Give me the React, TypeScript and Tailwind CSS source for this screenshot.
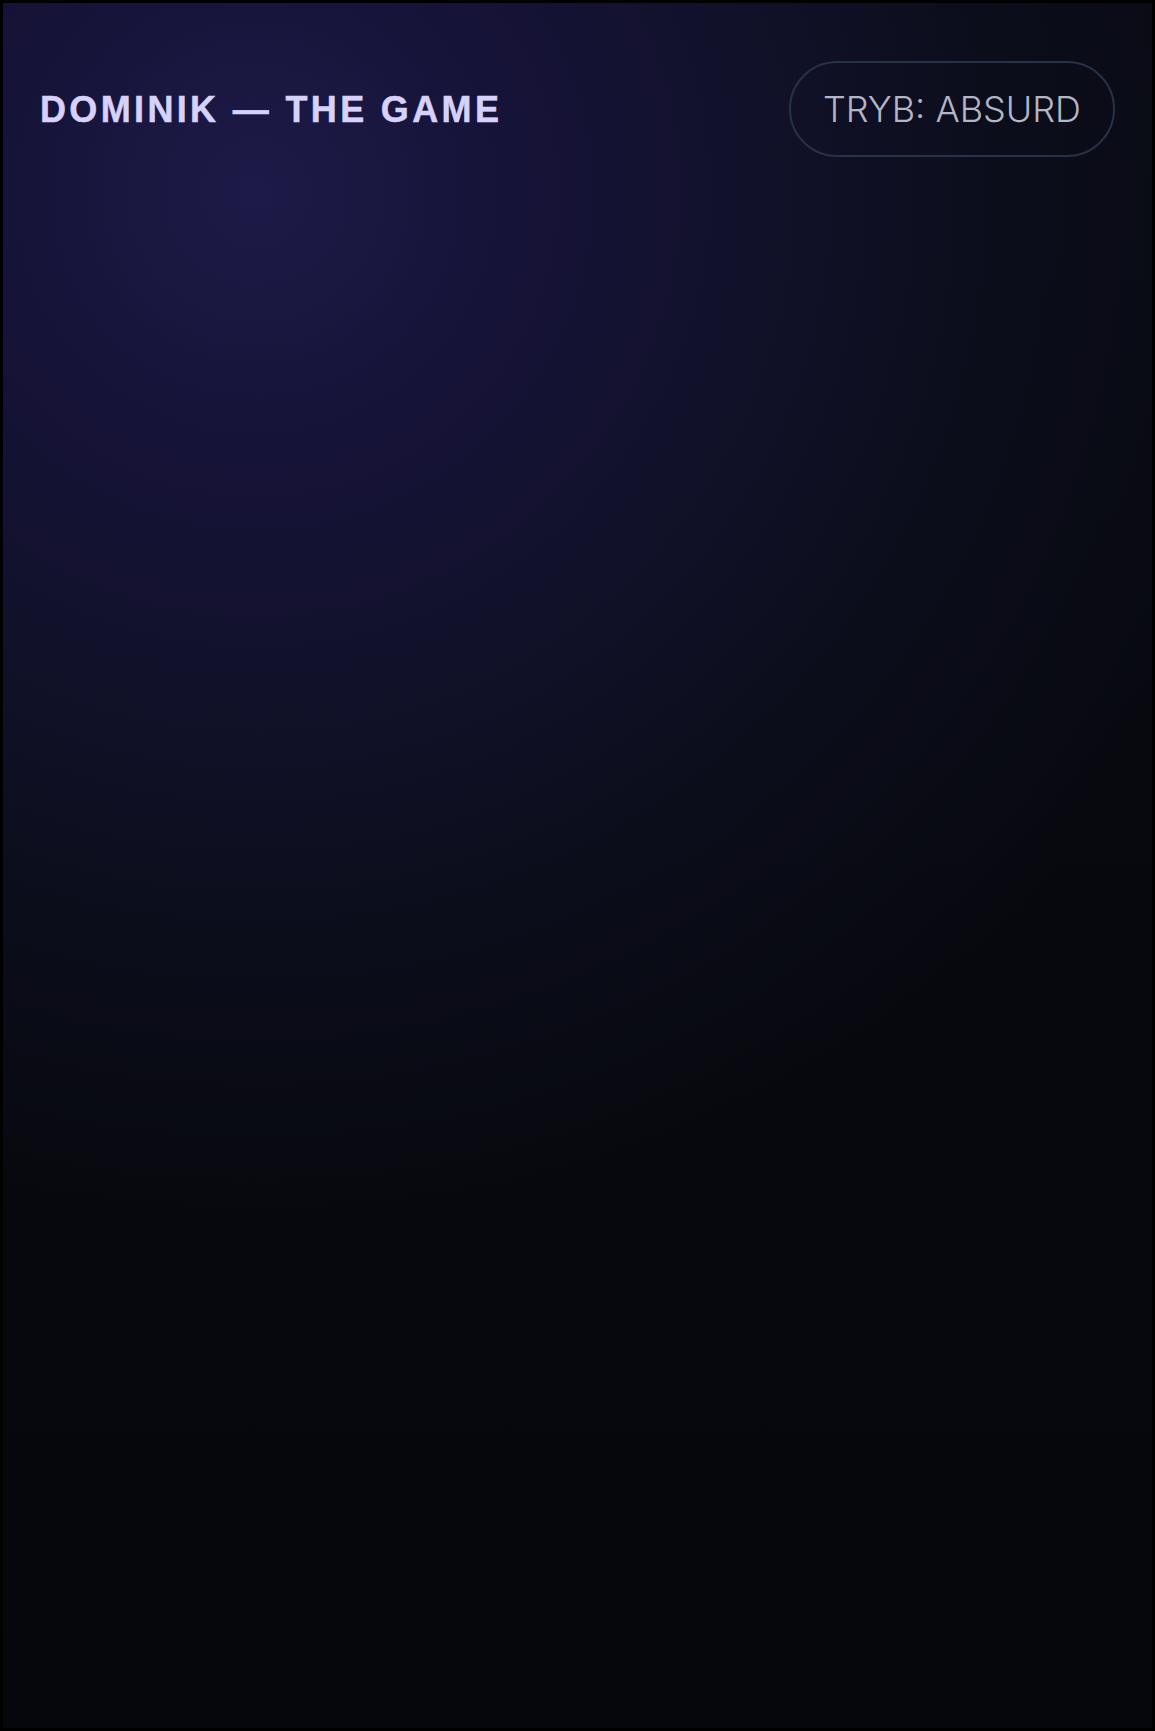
export default function App() {
  return (
    <div className="min-h-[1731px] w-full border-[3px] border-black bg-[#08090e]">
      <div className="min-h-[1725px] bg-[radial-gradient(circle_at_22%_11%,#1d1a48_0px,#161338_260px,#111129_520px,#0b0d1a_760px,rgba(8,9,14,0)_1050px),linear-gradient(180deg,#090a11_0%,#06070c_100%)]">
        <header className="flex items-start justify-between pl-[37px] pr-[37px] pt-[58px]">
          <h1 className="mt-[25px] font-['Liberation_Sans',Arial,sans-serif] text-[36px] font-bold leading-[48px] tracking-[0.093em] text-[#d6d2fd] [-webkit-text-stroke:0.5px_#d6d2fd]">
            DOMINIK — THE GAME
          </h1>
          <div className="flex h-[96px] items-center rounded-full border-2 border-[#283247] px-[32px]">
            <span className="font-['Inter',sans-serif] text-[36px] font-light leading-none text-[#b2b6c6]">
              TRYB: ABSURD
            </span>
          </div>
        </header>
      </div>
    </div>
  );
}
